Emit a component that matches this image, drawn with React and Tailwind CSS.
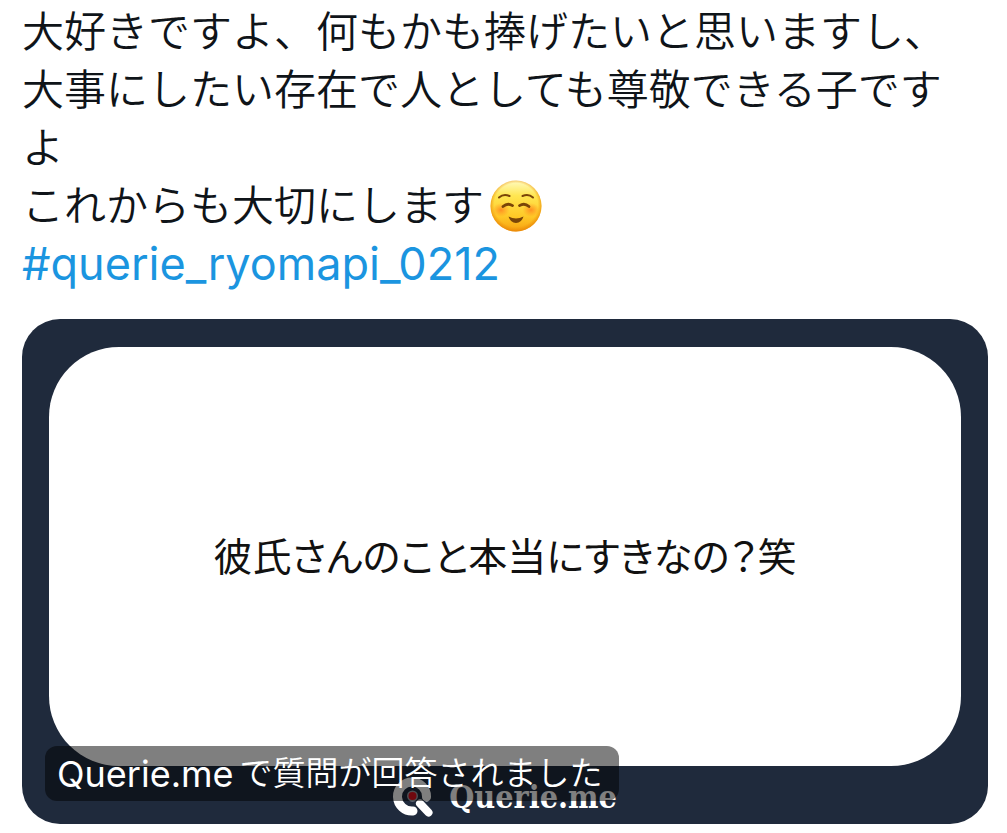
import React from 'react';

const HASHTAG = '#querie_ryomapi_0212';

function SmileEmoji() {
  return (
    <svg
      viewBox="0 0 52 52"
      className="inline-block size-13 ml-1.5"
      role="img"
      aria-label="☺️"
    >
      <defs>
        <linearGradient id="face" x1="0" y1="0" x2="0" y2="1">
          <stop offset="0" stopColor="#fffbc0" />
          <stop offset="0.3" stopColor="#ffe651" />
          <stop offset="0.7" stopColor="#ffc927" />
          <stop offset="1" stopColor="#f6a010" />
        </linearGradient>
        <radialGradient id="edge" cx="0.5" cy="0.48" r="0.52">
          <stop offset="0.82" stopColor="#ee8d08" stopOpacity="0" />
          <stop offset="1" stopColor="#e57f05" stopOpacity="0.75" />
        </radialGradient>
        <radialGradient id="cheek">
          <stop offset="0" stopColor="#ff7a1c" stopOpacity="0.75" />
          <stop offset="1" stopColor="#ff8a1c" stopOpacity="0" />
        </radialGradient>
      </defs>
      <circle cx="26" cy="26" r="25.5" fill="url(#face)" />
      <circle cx="26" cy="26" r="25.5" fill="url(#edge)" />
      <ellipse cx="11" cy="30" rx="8.5" ry="7" fill="url(#cheek)" />
      <ellipse cx="41" cy="30" rx="8.5" ry="7" fill="url(#cheek)" />
      <g fill="none" stroke="#7a4508" strokeLinecap="round">
        <path d="M9 17.5 Q13.5 13.4 19.5 16" strokeWidth="2" />
        <path d="M32.5 16 Q38.5 13.4 43 17.5" strokeWidth="2" />
        <path d="M13 26.5 Q17.5 22.4 22.5 25.6" strokeWidth="2.8" />
        <path d="M29.5 25.6 Q34.5 22.4 39 26.5" strokeWidth="2.8" />
      </g>
      <path d="M18.5 36.5 Q26 40.5 33.5 36.5 Q31.5 43 26 43 Q20.5 43 18.5 36.5 Z" fill="#7a4508" />
    </svg>
  );
}

function QuerieMark() {
  return (
    <svg viewBox="0 0 40 40" className="size-10" aria-hidden="true">
      <path
        d="M20 34 A14.5 14.5 0 1 1 33.5 20"
        fill="none"
        stroke="#fff"
        strokeWidth="9"
        strokeLinecap="round"
      />
      <path d="M27 26.5 L35.5 35.5" stroke="#fff" strokeWidth="8" strokeLinecap="round" />
      <circle cx="19.5" cy="19" r="5.5" fill="#9aa0a8" />
      <circle cx="19.5" cy="19" r="4" fill="#e0101c" />
    </svg>
  );
}

function QuestionCard() {
  return (
    <a
      href="#question"
      className="relative block rounded-[38px] bg-[#1f2a3c] px-[27px] pt-7 overflow-hidden"
    >
      <div className="flex h-[419px] items-center justify-center rounded-[70px] bg-white">
        <p className="text-[39px] leading-[58px] text-[#111] [font-feature-settings:'palt']">
          彼氏さんのこと本当にすきなの？笑
        </p>
      </div>

      <div className="flex h-[58px] items-center justify-center gap-4 pt-1">
        <QuerieMark />
        <span className="font-['DejaVu_Serif_Condensed','DejaVu_Serif',serif] font-bold text-[32px] leading-10 text-white">
          Querie.me
        </span>
      </div>

      {/* Link caption over the picture */}
      <div className="absolute bottom-[23px] left-[23px] flex h-[55px] items-center gap-1.5 rounded-xl bg-black/50 pl-3 pr-4 text-white whitespace-nowrap">
        <span className="text-[36px]">Querie.me</span>
        <span className="text-[33px] font-[350]">で質問が回答されました</span>
      </div>
    </a>
  );
}

export default function App() {
  return (
    <article
      lang="ja"
      className="bg-white pl-[22px] pr-[19px] pt-[3px] pb-2 font-['Inter','Noto_Sans_CJK_JP',sans-serif] text-[#0f1419]"
    >
      <div className="pr-8 text-[42px] leading-[58px] font-[350]">
        <p>大好きですよ、何もかも捧げたいと思いますし、大事にしたい存在で人としても尊敬できる子ですよ</p>
        <p className="flex h-[58px] items-center">
          これからも大切にします
          <SmileEmoji />
        </p>
        <p className="text-[45px] font-normal">
          <a href="#hashtag" className="text-[#1b95e0]">
            {HASHTAG}
          </a>
        </p>
      </div>

      <div className="mt-[26px]">
        <QuestionCard />
      </div>
    </article>
  );
}
